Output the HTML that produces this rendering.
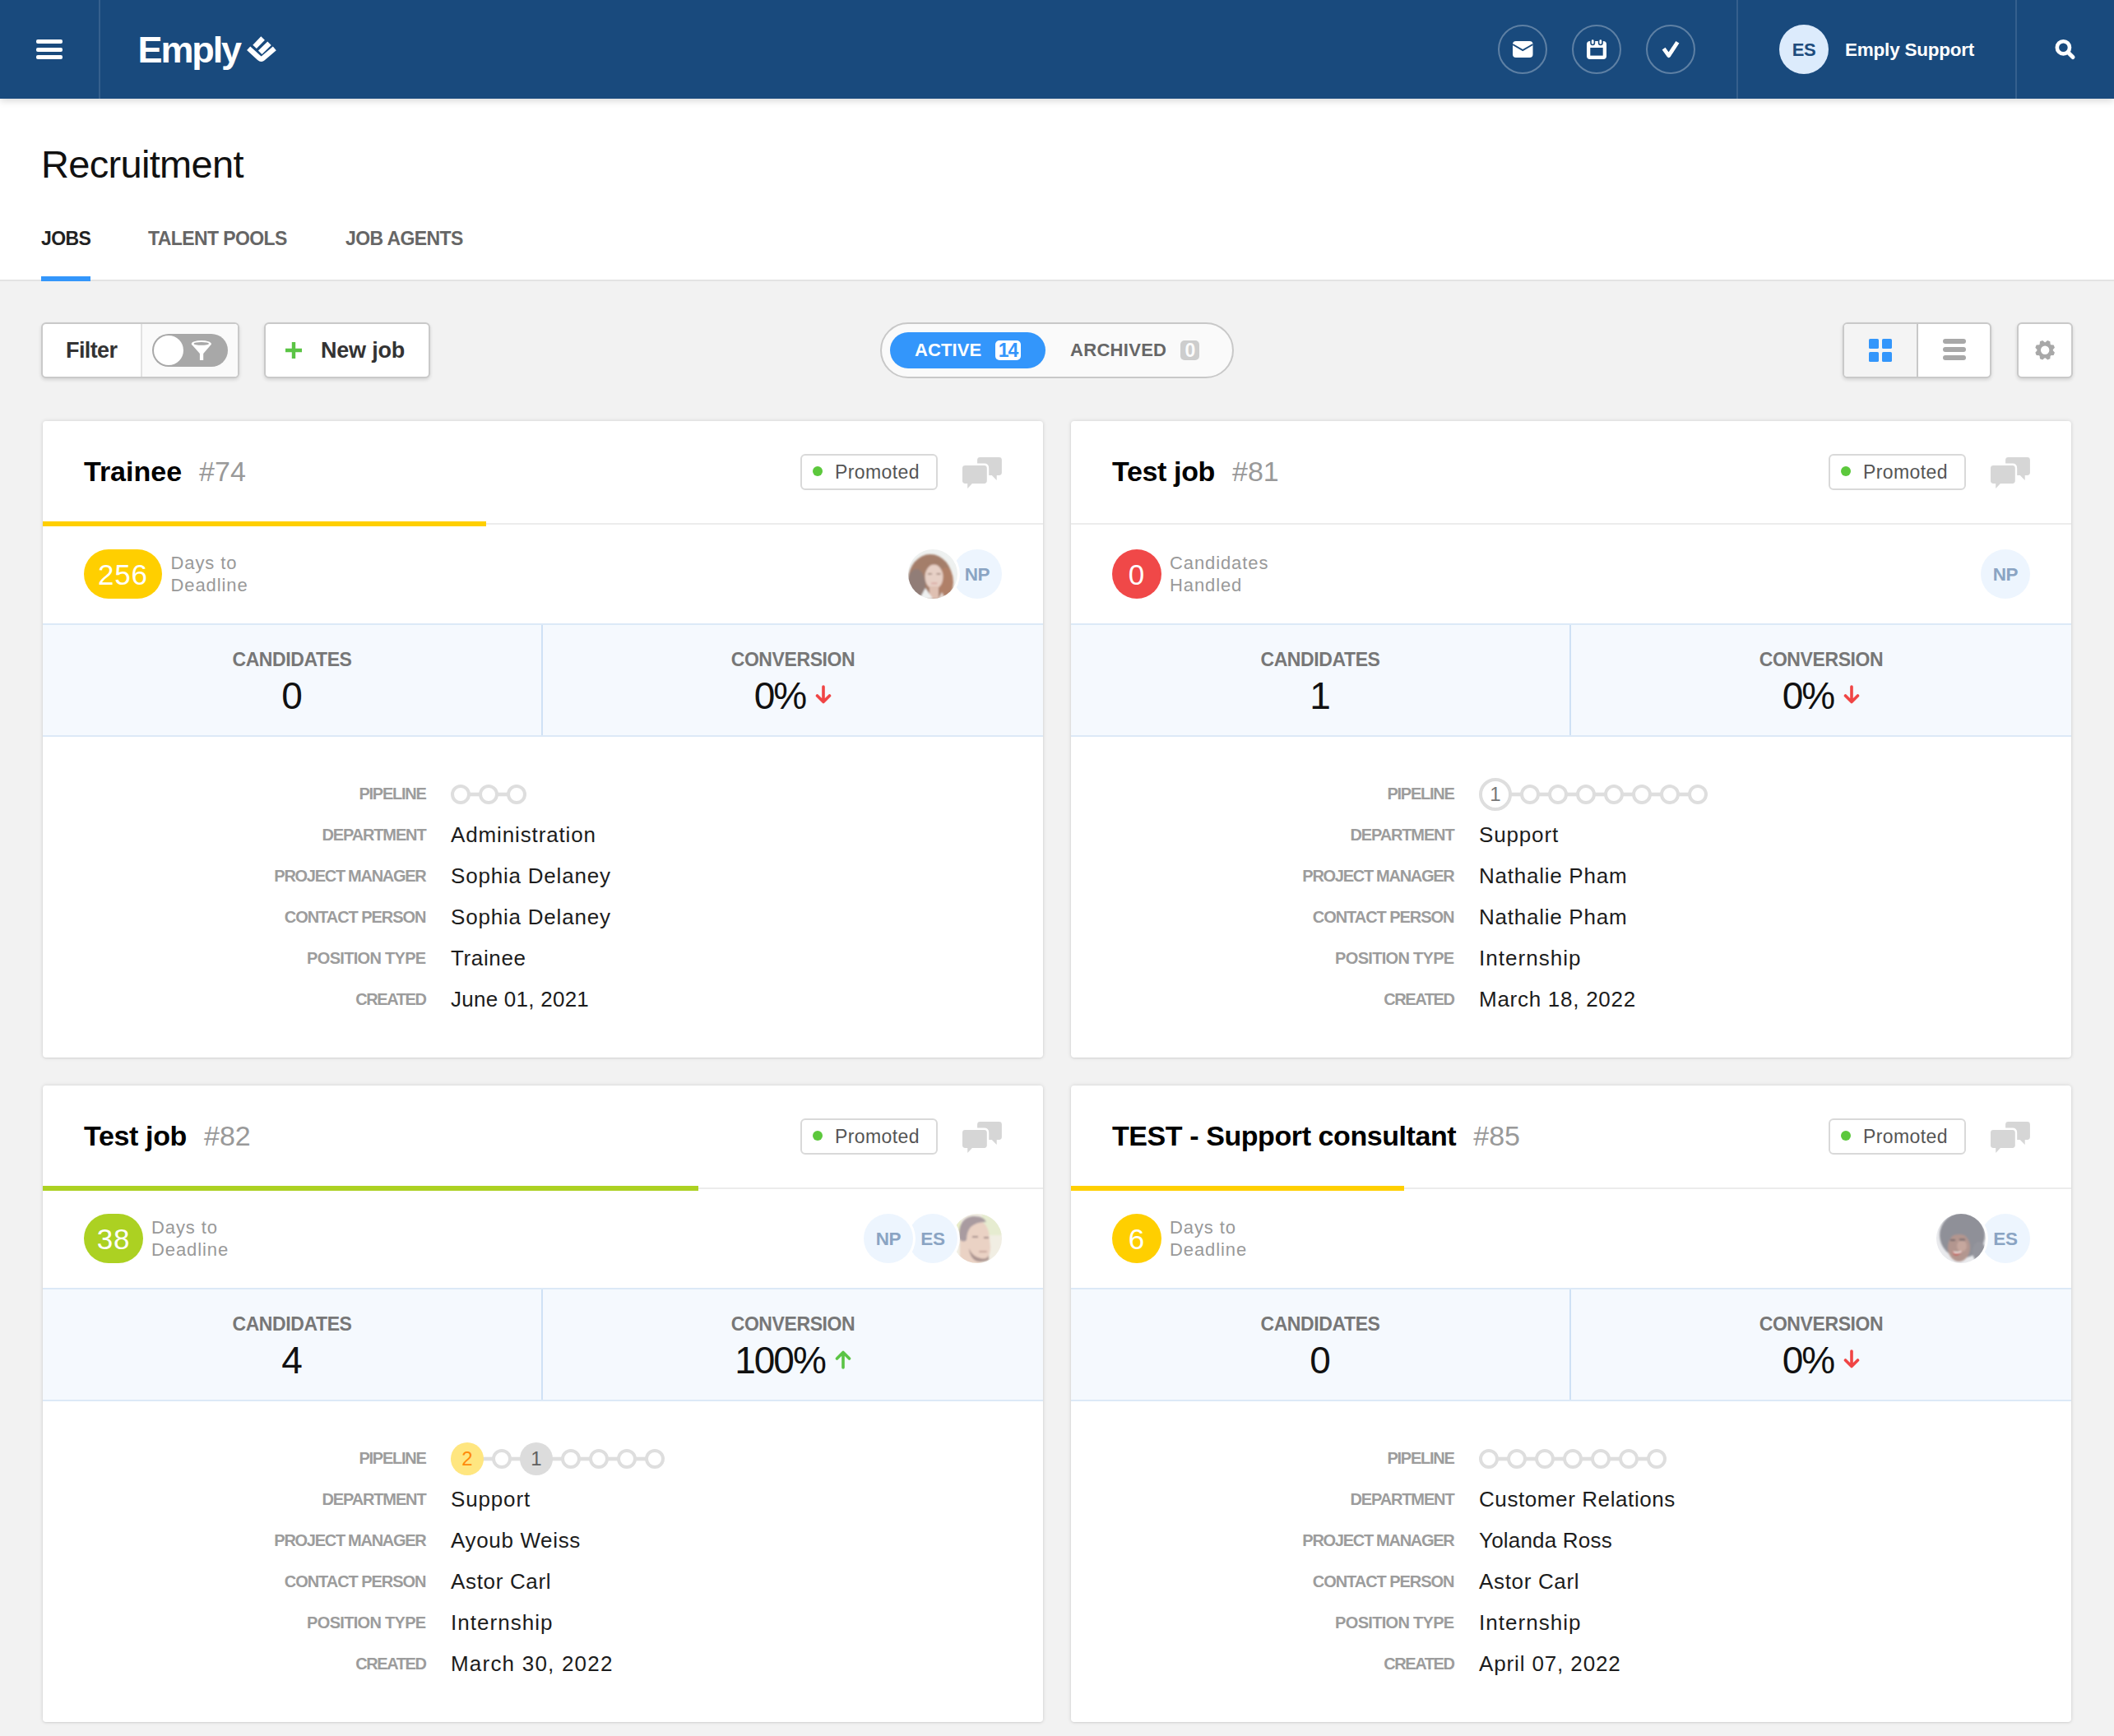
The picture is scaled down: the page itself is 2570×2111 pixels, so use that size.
<!DOCTYPE html>
<html>
<head>
<meta charset="utf-8">
<title>Recruitment</title>
<style>
*{box-sizing:border-box;margin:0;padding:0}
html,body{width:2570px;height:2111px;overflow:hidden}
body{font-family:"Liberation Sans",sans-serif;background:#f2f2f2;position:relative;color:#000}
.abs{position:absolute}
/* ---------- header ---------- */
#hdr{position:absolute;left:0;top:0;width:2570px;height:120px;background:#194a7d;box-shadow:0 2px 9px rgba(0,0,0,.18);z-index:5}
#hdr .sep{position:absolute;top:0;width:2px;height:120px;background:rgba(255,255,255,.125)}
#hdr .bar{position:absolute;left:44px;width:32px;height:5px;border-radius:2px;background:#fff}
#logo{position:absolute;left:167.5px;top:35px;font-size:45px;font-weight:bold;color:#fff;letter-spacing:-2.1px;line-height:52px;white-space:nowrap}
.hc{position:absolute;top:30px;width:60px;height:60px;border-radius:50%;border:2px solid rgba(255,255,255,.3)}
.hc svg{position:absolute;left:-2px;top:-2px}
#esav{position:absolute;left:2163px;top:30px;width:60px;height:60px;border-radius:50%;background:#dcebfc;color:#1e4b7c;font-weight:bold;font-size:22px;line-height:62.5px;text-align:center;letter-spacing:-.5px}
#uname{position:absolute;left:2243px;top:44.5px;font-size:22.5px;font-weight:bold;color:#fff;line-height:32px;letter-spacing:-.22px;white-space:nowrap}
/* ---------- subheader ---------- */
#sub{position:absolute;left:0;top:120px;width:2570px;height:222px;background:#fff;border-bottom:2px solid #e3e3e3}
#title{position:absolute;left:50px;top:170px;font-size:47px;line-height:60px;letter-spacing:-.68px;color:#111;white-space:nowrap}
.tab{position:absolute;top:275px;font-size:23px;font-weight:bold;line-height:30px;color:#666;white-space:nowrap;letter-spacing:-.6px}
#tabline{position:absolute;left:50px;top:336px;width:60px;height:6px;background:#3396fb}
/* ---------- toolbar ---------- */
.btn{position:absolute;top:392px;height:68px;background:#fff;border:2px solid #c9c9c9;border-radius:6px;box-shadow:0 2px 4px rgba(0,0,0,.13)}
.btxt{position:absolute;font-size:27px;font-weight:bold;color:#333;line-height:36px;white-space:nowrap;letter-spacing:-.6px}
#pill{position:absolute;left:1070px;top:392px;width:430px;height:68px;border-radius:34px;border:2px solid #c8c8c8;background:#fafafa}
#actv{position:absolute;left:10px;top:10px;width:189px;height:44px;border-radius:22px;background:#3396fb}
.ptxt{position:absolute;font-size:22px;font-weight:bold;line-height:30px;white-space:nowrap;letter-spacing:.1px}
.pbadge{position:absolute;top:20px;height:24px;border-radius:5px;font-size:23px;font-weight:bold;line-height:25.5px;text-align:center;letter-spacing:-1px;overflow:hidden}
/* ---------- cards ---------- */
.card{position:absolute;width:1218px;height:775px}
.card::before{content:"";position:absolute;left:2px;top:1px;right:0;bottom:0;background:#fff;border-radius:4px;box-shadow:0 0 5px rgba(0,0,0,.14),0 1px 2px rgba(0,0,0,.06)}
.card .ttl{position:absolute;left:52px;top:40px;font-size:34px;font-weight:bold;line-height:44px;color:#000;white-space:nowrap;letter-spacing:-.15px}
.card .ttl span{font-weight:normal;color:#999;margin-left:21px;letter-spacing:0}
.card .hline{position:absolute;left:2px;top:125px;width:1216px;height:2px;background:#ececec}
.card .prog{position:absolute;left:2px;top:123px;height:6px}
.promo{position:absolute;left:923px;top:41px;width:167px;height:44px;border:2px solid #d9d9d9;border-radius:6px;background:#fff}
.promo i{position:absolute;left:13px;top:13px;width:12px;height:12px;border-radius:50%;background:#5cc83c}
.promo b{position:absolute;left:40px;top:6px;font-weight:normal;font-size:23px;line-height:28px;color:#555;letter-spacing:.4px}
.chat{position:absolute;left:1119px;top:44px}
.badge{position:absolute;left:52px;top:157px;height:60px;border-radius:30px;color:#fff;font-size:35px;line-height:61px;text-align:center;letter-spacing:.8px}
.blab{position:absolute;top:160px;margin-left:-.5px;font-size:22px;line-height:27px;color:#999;letter-spacing:.9px;white-space:nowrap}
.av{position:absolute;top:157px;width:60px;height:60px;border-radius:50%;background:#edf5fe;color:#8aa4c3;font-size:22.5px;font-weight:bold;line-height:62.5px;text-align:center;letter-spacing:-.3px;box-shadow:0 0 0 3px #fff}
.av.ph{overflow:hidden;background:#fff}
.av.ph svg{display:block}
.stats{position:absolute;left:2px;top:247px;width:1216px;height:138px;background:#f5f9fe;border-top:2px solid #dce9f7;border-bottom:2px solid #dce9f7}
.stats .div{position:absolute;left:606px;top:0;width:2px;height:134px;background:#cfe1f5}
.stats .lab{position:absolute;top:27px;width:606px;text-align:center;font-size:23px;font-weight:bold;color:#777;line-height:30px;letter-spacing:-.4px}
.stats .num{position:absolute;top:58px;width:606px;text-align:center;font-size:46px;color:#111;line-height:56px;white-space:nowrap}
.stats .num.cv{letter-spacing:-2px}
.stats .num svg{margin-left:12px;vertical-align:5px}
.rows{position:absolute;left:0;top:429px;width:1218px}
.row{position:relative;height:50px}
.row .k{position:absolute;right:750.5px;top:12px;font-size:20px;font-weight:bold;color:#9c9c9c;line-height:26px;white-space:nowrap;letter-spacing:-1px}
.row .v{position:absolute;left:498px;top:7.5px;font-size:26px;color:#1c1c1c;line-height:34px;white-space:nowrap;letter-spacing:.72px}
.row .v.dt{letter-spacing:1.05px}
.pipe{position:absolute;left:497.7px;top:0}
</style>
</head>
<body>

<!-- ================= HEADER ================= -->
<div id="hdr">
  <div class="bar" style="top:48px"></div><div class="bar" style="top:58px"></div><div class="bar" style="top:67px"></div>
  <div class="sep" style="left:120px"></div>
  <div id="logo">Emply</div>
  <svg class="abs" style="left:296px;top:40px" width="44" height="40" viewBox="296 40 44 40">
    <path d="M302.2 58.8 L315.2 70.6 Q317.6 72.8 320 70.6 L333.8 58.8" fill="none" stroke="#fff" stroke-width="6.2" stroke-linejoin="round" stroke-linecap="butt"/>
    <path d="M309.6 56.9 L319.6 46.5" fill="none" stroke="#fff" stroke-width="6.4"/>
    <path d="M316.2 63.8 L327.5 52.8" fill="none" stroke="#fff" stroke-width="6.4"/>
  </svg>
  <div class="hc" style="left:1821px"><svg width="60" height="60" viewBox="0 0 60 60"><rect x="18" y="20" width="24.5" height="20" rx="4" fill="#fff"/><path d="M18 24 L30.2 31 L42.5 24" fill="none" stroke="#194a7d" stroke-width="2"/></svg></div>
  <div class="hc" style="left:1911px"><svg width="60" height="60" viewBox="0 0 60 60"><rect x="18" y="20" width="24" height="22" rx="4" fill="#fff"/><rect x="22.3" y="28" width="15.4" height="9.6" fill="#194a7d"/><rect x="23" y="17.5" width="4.4" height="7" rx="2.2" fill="#fff" stroke="#194a7d" stroke-width="1.6"/><rect x="32.6" y="17.5" width="4.4" height="7" rx="2.2" fill="#fff" stroke="#194a7d" stroke-width="1.6"/></svg></div>
  <div class="hc" style="left:2001px"><svg width="60" height="60" viewBox="0 0 60 60"><path d="M21.6 29.2 L27.7 37.6 L38.4 21.2" fill="none" stroke="#fff" stroke-width="4.8" stroke-linecap="butt" stroke-linejoin="round"/></svg></div>
  <div class="sep" style="left:2111px"></div>
  <div id="esav">ES</div>
  <div id="uname">Emply Support</div>
  <div class="sep" style="left:2450px"></div>
  <svg class="abs" style="left:2494px;top:44px" width="32" height="32" viewBox="0 0 32 32"><circle cx="14.4" cy="13.8" r="7.6" fill="none" stroke="#fff" stroke-width="4.6"/><path d="M20.2 19.8 L26 25.6" stroke="#fff" stroke-width="5" stroke-linecap="round"/></svg>
</div>

<!-- ================= SUBHEADER ================= -->
<div id="sub"></div>
<div id="title">Recruitment</div>
<div class="tab" style="left:50px;color:#222">JOBS</div>
<div class="tab" style="left:180px">TALENT POOLS</div>
<div class="tab" style="left:420px">JOB AGENTS</div>
<div id="tabline"></div>

<!-- ================= TOOLBAR ================= -->
<div class="btn" style="left:50px;width:241px">
  <div class="abs" style="left:119px;top:0;width:118px;height:64px;background:#fafafa;border-left:2px solid #e2e2e2;border-radius:0 4px 4px 0"></div>
  <div class="btxt" style="left:28px;top:14px">Filter</div>
  <div class="abs" style="left:133px;top:12px;width:92px;height:40px;border-radius:20px;background:#a8a8a8">
    <div class="abs" style="left:2px;top:2px;width:36px;height:36px;border-radius:50%;background:#fff"></div>
    <svg class="abs" style="left:46px;top:7px" width="28" height="28" viewBox="0 0 28 28"><ellipse cx="13.85" cy="5.1" rx="12.1" ry="4" fill="#fff"/><path d="M1.75 5.6 L11.9 17 V25 H16.2 V17 L25.95 5.6 Z" fill="#fff"/><ellipse cx="13.8" cy="4.9" rx="9.2" ry="1.85" fill="#a8a8a8"/></svg>
  </div>
</div>
<div class="btn" style="left:321px;width:202px">
  <svg class="abs" style="left:24px;top:22px" width="20" height="20" viewBox="0 0 20 20"><path d="M10 0.5 V19.5 M0.5 10 H19.5" stroke="#5bc445" stroke-width="4.4" stroke-linecap="round"/></svg>
  <div class="btxt" style="left:67px;top:14px;letter-spacing:-.2px">New job</div>
</div>

<div id="pill">
  <div id="actv"></div>
  <div class="ptxt" style="left:40px;top:17px;color:#fff">ACTIVE</div>
  <div class="pbadge" style="left:138px;width:31px;background:#fff;color:#3396fb">14</div>
  <div class="ptxt" style="left:229px;top:17px;color:#666;letter-spacing:.3px">ARCHIVED</div>
  <div class="pbadge" style="left:363px;width:23px;background:#cdcdcd;color:#fbfbfb">0</div>
</div>

<div class="btn" style="left:2240px;width:181px">
  <div class="abs" style="left:0;top:0;width:90px;height:64px;background:#f4f4f4;border-radius:4px 0 0 4px;border-right:2px solid #c8c8c8"></div>
  <svg class="abs" style="left:30px;top:18px" width="30" height="30" viewBox="0 0 30 30" fill="#3396fb"><rect x="0" y="0" width="12" height="12" rx="1.6"/><rect x="16" y="0" width="12" height="12" rx="1.6"/><rect x="0" y="16" width="12" height="12" rx="1.6"/><rect x="16" y="16" width="12" height="12" rx="1.6"/></svg>
  <svg class="abs" style="left:120px;top:18px" width="30" height="30" viewBox="0 0 30 30" fill="#a8a8a8"><rect x="0" y="0" width="28" height="6" rx="3"/><rect x="0" y="10" width="28" height="6" rx="3"/><rect x="0" y="20" width="28" height="6" rx="3"/></svg>
</div>
<div class="btn" style="left:2452px;width:68px">
  <svg class="abs" style="left:19px;top:19px" width="28" height="28" viewBox="-14 -14 28 28"><defs><path id="t" d="M-3.6 -8.4 L-1.7 -12.05 H1.7 L3.6 -8.4 Z"/></defs><g fill="#a8a8a8" transform="translate(-.85 -1.3)"><circle r="9.5"/><use href="#t" transform="rotate(22.5)"/><use href="#t" transform="rotate(67.5)"/><use href="#t" transform="rotate(112.5)"/><use href="#t" transform="rotate(157.5)"/><use href="#t" transform="rotate(202.5)"/><use href="#t" transform="rotate(247.5)"/><use href="#t" transform="rotate(292.5)"/><use href="#t" transform="rotate(337.5)"/></g><circle r="5.2" cx="-.85" cy="-1.3" fill="#fff"/></svg>
</div>

<!-- ================= CARDS ================= -->
<div class="card" style="left:50px;top:511px">
<div class="ttl" style="letter-spacing:0px">Trainee<span>#74</span></div>
<div class="promo"><i></i><b>Promoted</b></div>
<svg class="chat" width="50" height="40" viewBox="0 0 50 40" fill="#d6d6d6"><path d="M22.5 1 H45.5 Q48.9 1 48.9 4.4 V19.5 Q48.9 22.9 45.5 22.9 H42.7 V28.9 L36.8 22.9 H33.2 V14.5 Q33.2 8.6 27.4 8.6 H19.1 V4.4 Q19.1 1 22.5 1 Z"/><path d="M4.4 11 H27.4 Q30.8 11 30.8 14.4 V29.5 Q30.8 32.9 27.4 32.9 H12.9 L7.2 38.9 V32.9 H4.4 Q1 32.9 1 29.5 V14.4 Q1 11 4.4 11 Z"/></svg>
<div class="hline"></div>
<div class="prog" style="width:539px;background:#ffcf00"></div>
<div class="badge" style="width:95px;background:#ffcf00">256</div>
<div class="blab" style="left:158px">Days to<br>Deadline</div>
<div class="av ph" style="left:1054px;z-index:10"><svg width="60" height="60" viewBox="0 0 60 60"><defs><filter id="bl1" x="-10%" y="-10%" width="120%" height="120%"><feGaussianBlur stdDeviation="1.1"/></filter></defs><rect width="60" height="60" fill="#eef1f0"/><g filter="url(#bl1)"><ellipse cx="27" cy="38" rx="27" ry="32" fill="#a47e6a"/><ellipse cx="10" cy="44" rx="11" ry="20" fill="#917d77"/><ellipse cx="46" cy="40" rx="9" ry="18" fill="#b08068"/><ellipse cx="31.5" cy="33.5" rx="11" ry="15" fill="#e7d0c6"/><path d="M20 20 Q31 10 43 20 Q36 14 31 15 Q25 15 20 20 Z" fill="#a07560"/><rect x="26" y="45" width="11" height="15" fill="#dfc0b2"/><path d="M14 60 L21 47 L30 60 Z" fill="#eef0f0"/><path d="M37 60 L41 52 L45 60 Z" fill="#e4d6d0"/><rect x="24" y="29" width="5" height="1.6" fill="#9c8278"/><rect x="34.5" y="29" width="5" height="1.6" fill="#9c8278"/><rect x="28" y="40.5" width="7.5" height="1.8" rx=".9" fill="#d9a5a0"/></g></svg></div>
<div class="av" style="left:1108px;z-index:9">NP</div>
<div class="stats"><div class="div"></div><div class="lab" style="left:0">CANDIDATES</div><div class="num" style="left:0">0</div><div class="lab" style="left:608px;width:608px">CONVERSION</div><div class="num cv" style="left:608px;width:608px">0%<svg width="20" height="24" viewBox="0 0 20 24"><path d="M10 2 V20 M2.5 13 L10 20.5 L17.5 13" fill="none" stroke="#f04545" stroke-width="3.6" stroke-linecap="round" stroke-linejoin="round"/></svg></div></div>
<div class="rows">
<div class="row"><div class="k" style="letter-spacing:-1.26px">PIPELINE</div><svg class="pipe" width="94" height="52" viewBox="0 0 94 52"><rect x="22.00" y="23.7" width="14.00" height="4.6" fill="#dedede"/><rect x="56.00" y="23.7" width="14.00" height="4.6" fill="#dedede"/><circle cx="12.00" cy="26" r="10.00" fill="#fff" stroke="#dedede" stroke-width="4"/><circle cx="46.00" cy="26" r="10.00" fill="#fff" stroke="#dedede" stroke-width="4"/><circle cx="80.00" cy="26" r="10.00" fill="#fff" stroke="#dedede" stroke-width="4"/></svg></div>
<div class="row"><div class="k" style="letter-spacing:-1.13px">DEPARTMENT</div><div class="v" style="letter-spacing:0.87px">Administration</div></div>
<div class="row"><div class="k" style="letter-spacing:-1.28px">PROJECT MANAGER</div><div class="v" style="letter-spacing:0.8px">Sophia Delaney</div></div>
<div class="row"><div class="k" style="letter-spacing:-1.04px">CONTACT PERSON</div><div class="v" style="letter-spacing:0.8px">Sophia Delaney</div></div>
<div class="row"><div class="k" style="letter-spacing:-0.69px">POSITION TYPE</div><div class="v" style="letter-spacing:0.63px">Trainee</div></div>
<div class="row"><div class="k" style="letter-spacing:-1.41px">CREATED</div><div class="v" style="letter-spacing:0.25px">June 01, 2021</div></div>
</div></div>
<div class="card" style="left:1300px;top:511px">
<div class="ttl" style="letter-spacing:-0.35px">Test job<span>#81</span></div>
<div class="promo"><i></i><b>Promoted</b></div>
<svg class="chat" width="50" height="40" viewBox="0 0 50 40" fill="#d6d6d6"><path d="M22.5 1 H45.5 Q48.9 1 48.9 4.4 V19.5 Q48.9 22.9 45.5 22.9 H42.7 V28.9 L36.8 22.9 H33.2 V14.5 Q33.2 8.6 27.4 8.6 H19.1 V4.4 Q19.1 1 22.5 1 Z"/><path d="M4.4 11 H27.4 Q30.8 11 30.8 14.4 V29.5 Q30.8 32.9 27.4 32.9 H12.9 L7.2 38.9 V32.9 H4.4 Q1 32.9 1 29.5 V14.4 Q1 11 4.4 11 Z"/></svg>
<div class="hline"></div>
<div class="badge" style="width:60px;background:#f04848">0</div>
<div class="blab" style="left:122.5px">Candidates<br>Handled</div>
<div class="av" style="left:1108px;z-index:10">NP</div>
<div class="stats"><div class="div"></div><div class="lab" style="left:0">CANDIDATES</div><div class="num" style="left:0">1</div><div class="lab" style="left:608px;width:608px">CONVERSION</div><div class="num cv" style="left:608px;width:608px">0%<svg width="20" height="24" viewBox="0 0 20 24"><path d="M10 2 V20 M2.5 13 L10 20.5 L17.5 13" fill="none" stroke="#f04545" stroke-width="3.6" stroke-linecap="round" stroke-linejoin="round"/></svg></div></div>
<div class="rows">
<div class="row"><div class="k" style="letter-spacing:-1.26px">PIPELINE</div><svg class="pipe" width="280" height="52" viewBox="0 0 280 52"><rect x="38.00" y="23.7" width="14.00" height="4.6" fill="#dedede"/><rect x="72.00" y="23.7" width="14.00" height="4.6" fill="#dedede"/><rect x="106.00" y="23.7" width="14.00" height="4.6" fill="#dedede"/><rect x="140.00" y="23.7" width="14.00" height="4.6" fill="#dedede"/><rect x="174.00" y="23.7" width="14.00" height="4.6" fill="#dedede"/><rect x="208.00" y="23.7" width="14.00" height="4.6" fill="#dedede"/><rect x="242.00" y="23.7" width="14.00" height="4.6" fill="#dedede"/><circle cx="20.00" cy="26" r="18.00" fill="#fff" stroke="#dedede" stroke-width="4"/><text x="20.00" y="33.6" text-anchor="middle" font-family="Liberation Sans" font-size="24" fill="#777">1</text><circle cx="62.00" cy="26" r="10.00" fill="#fff" stroke="#dedede" stroke-width="4"/><circle cx="96.00" cy="26" r="10.00" fill="#fff" stroke="#dedede" stroke-width="4"/><circle cx="130.00" cy="26" r="10.00" fill="#fff" stroke="#dedede" stroke-width="4"/><circle cx="164.00" cy="26" r="10.00" fill="#fff" stroke="#dedede" stroke-width="4"/><circle cx="198.00" cy="26" r="10.00" fill="#fff" stroke="#dedede" stroke-width="4"/><circle cx="232.00" cy="26" r="10.00" fill="#fff" stroke="#dedede" stroke-width="4"/><circle cx="266.00" cy="26" r="10.00" fill="#fff" stroke="#dedede" stroke-width="4"/></svg></div>
<div class="row"><div class="k" style="letter-spacing:-1.13px">DEPARTMENT</div><div class="v" style="letter-spacing:0.84px">Support</div></div>
<div class="row"><div class="k" style="letter-spacing:-1.28px">PROJECT MANAGER</div><div class="v" style="letter-spacing:0.75px">Nathalie Pham</div></div>
<div class="row"><div class="k" style="letter-spacing:-1.04px">CONTACT PERSON</div><div class="v" style="letter-spacing:0.75px">Nathalie Pham</div></div>
<div class="row"><div class="k" style="letter-spacing:-0.69px">POSITION TYPE</div><div class="v" style="letter-spacing:1.04px">Internship</div></div>
<div class="row"><div class="k" style="letter-spacing:-1.41px">CREATED</div><div class="v" style="letter-spacing:0.73px">March 18, 2022</div></div>
</div></div>
<div class="card" style="left:50px;top:1319px">
<div class="ttl" style="letter-spacing:-0.35px">Test job<span>#82</span></div>
<div class="promo"><i></i><b>Promoted</b></div>
<svg class="chat" width="50" height="40" viewBox="0 0 50 40" fill="#d6d6d6"><path d="M22.5 1 H45.5 Q48.9 1 48.9 4.4 V19.5 Q48.9 22.9 45.5 22.9 H42.7 V28.9 L36.8 22.9 H33.2 V14.5 Q33.2 8.6 27.4 8.6 H19.1 V4.4 Q19.1 1 22.5 1 Z"/><path d="M4.4 11 H27.4 Q30.8 11 30.8 14.4 V29.5 Q30.8 32.9 27.4 32.9 H12.9 L7.2 38.9 V32.9 H4.4 Q1 32.9 1 29.5 V14.4 Q1 11 4.4 11 Z"/></svg>
<div class="hline"></div>
<div class="prog" style="width:797px;background:#acd122"></div>
<div class="badge" style="width:72px;background:#acd122">38</div>
<div class="blab" style="left:134.5px">Days to<br>Deadline</div>
<div class="av" style="left:1000px;z-index:10">NP</div>
<div class="av" style="left:1054px;z-index:9">ES</div>
<div class="av ph" style="left:1108px;z-index:8"><svg width="60" height="60" viewBox="0 0 60 60"><defs><filter id="bl2" x="-10%" y="-10%" width="120%" height="120%"><feGaussianBlur stdDeviation="1.1"/></filter></defs><rect width="60" height="60" fill="#f1eee3"/><g filter="url(#bl2)"><rect x="36" y="0" width="24" height="26" fill="#e6ecd0"/><rect x="0" y="6" width="10" height="20" fill="#e9edc9"/><path d="M9 60 L9 24 Q10 8 26 7 Q40 7 44 22 L46 40 Q46 52 40 56 L33 60 Z" fill="#ead2c4"/><path d="M8 30 Q6 6 24 3 Q38 2 41 10 Q30 9 22 16 Q17 22 17 32 Q12 36 8 30 Z" fill="#a99ba0"/><path d="M20 42 Q24 52 34 54 Q42 56 44 50 L44 56 Q36 60 28 57 Q21 53 20 42 Z" fill="#ab9490"/><rect x="24" y="27" width="7" height="2" fill="#a58f8a"/><rect x="38" y="28" width="6" height="2" fill="#a58f8a"/><rect x="32" y="45" width="10" height="2" rx="1" fill="#c9a79d"/></g></svg></div>
<div class="stats"><div class="div"></div><div class="lab" style="left:0">CANDIDATES</div><div class="num" style="left:0">4</div><div class="lab" style="left:608px;width:608px">CONVERSION</div><div class="num cv" style="left:608px;width:608px">100%<svg width="20" height="24" viewBox="0 0 20 24"><path d="M10 22 V4 M2.5 11 L10 3.5 L17.5 11" fill="none" stroke="#5bc445" stroke-width="3.6" stroke-linecap="round" stroke-linejoin="round"/></svg></div></div>
<div class="rows">
<div class="row"><div class="k" style="letter-spacing:-1.26px">PIPELINE</div><svg class="pipe" width="262" height="52" viewBox="0 0 262 52"><rect x="38.00" y="23.7" width="14.00" height="4.6" fill="#dedede"/><rect x="72.00" y="23.7" width="14.00" height="4.6" fill="#dedede"/><rect x="122.00" y="23.7" width="14.00" height="4.6" fill="#dedede"/><rect x="156.00" y="23.7" width="14.00" height="4.6" fill="#dedede"/><rect x="190.00" y="23.7" width="14.00" height="4.6" fill="#dedede"/><rect x="224.00" y="23.7" width="14.00" height="4.6" fill="#dedede"/><circle cx="20.00" cy="26" r="20.00" fill="#ffe680"/><text x="20.00" y="33.6" text-anchor="middle" font-family="Liberation Sans" font-size="24" fill="#ff8a0a">2</text><circle cx="62.00" cy="26" r="10.00" fill="#fff" stroke="#dedede" stroke-width="4"/><circle cx="104.00" cy="26" r="20.00" fill="#dcdcdc"/><text x="104.00" y="33.6" text-anchor="middle" font-family="Liberation Sans" font-size="24" fill="#606060">1</text><circle cx="146.00" cy="26" r="10.00" fill="#fff" stroke="#dedede" stroke-width="4"/><circle cx="180.00" cy="26" r="10.00" fill="#fff" stroke="#dedede" stroke-width="4"/><circle cx="214.00" cy="26" r="10.00" fill="#fff" stroke="#dedede" stroke-width="4"/><circle cx="248.00" cy="26" r="10.00" fill="#fff" stroke="#dedede" stroke-width="4"/></svg></div>
<div class="row"><div class="k" style="letter-spacing:-1.13px">DEPARTMENT</div><div class="v" style="letter-spacing:0.84px">Support</div></div>
<div class="row"><div class="k" style="letter-spacing:-1.28px">PROJECT MANAGER</div><div class="v" style="letter-spacing:0.65px">Ayoub Weiss</div></div>
<div class="row"><div class="k" style="letter-spacing:-1.04px">CONTACT PERSON</div><div class="v" style="letter-spacing:0.67px">Astor Carl</div></div>
<div class="row"><div class="k" style="letter-spacing:-0.69px">POSITION TYPE</div><div class="v" style="letter-spacing:1.04px">Internship</div></div>
<div class="row"><div class="k" style="letter-spacing:-1.41px">CREATED</div><div class="v" style="letter-spacing:1.21px">March 30, 2022</div></div>
</div></div>
<div class="card" style="left:1300px;top:1319px">
<div class="ttl" style="letter-spacing:-0.42px">TEST - Support consultant<span>#85</span></div>
<div class="promo"><i></i><b>Promoted</b></div>
<svg class="chat" width="50" height="40" viewBox="0 0 50 40" fill="#d6d6d6"><path d="M22.5 1 H45.5 Q48.9 1 48.9 4.4 V19.5 Q48.9 22.9 45.5 22.9 H42.7 V28.9 L36.8 22.9 H33.2 V14.5 Q33.2 8.6 27.4 8.6 H19.1 V4.4 Q19.1 1 22.5 1 Z"/><path d="M4.4 11 H27.4 Q30.8 11 30.8 14.4 V29.5 Q30.8 32.9 27.4 32.9 H12.9 L7.2 38.9 V32.9 H4.4 Q1 32.9 1 29.5 V14.4 Q1 11 4.4 11 Z"/></svg>
<div class="hline"></div>
<div class="prog" style="width:405px;background:#ffcf00"></div>
<div class="badge" style="width:60px;background:#ffcf00">6</div>
<div class="blab" style="left:122.5px">Days to<br>Deadline</div>
<div class="av ph" style="left:1054px;z-index:10"><svg width="60" height="60" viewBox="0 0 60 60"><defs><filter id="bl3" x="-10%" y="-10%" width="120%" height="120%"><feGaussianBlur stdDeviation="1.1"/></filter></defs><rect width="60" height="60" fill="#e9eaed"/><g filter="url(#bl3)"><circle cx="31.5" cy="26" r="27.5" fill="#8f9098"/><ellipse cx="52" cy="46" rx="8" ry="12" fill="#94959d"/><ellipse cx="27.5" cy="41" rx="13.5" ry="17" fill="#b3968f"/><ellipse cx="31" cy="39" rx="6" ry="7" fill="#c6a79e"/><path d="M14 28 Q28 16 42 28 Q28 22 14 28 Z" fill="#8f9098"/><rect x="17" y="31" width="6" height="2" fill="#6f6468"/><rect x="28" y="30.5" width="7" height="2" fill="#6f6468"/><path d="M19 45 Q27 50 32 44 Q28 53 21 50 Z" fill="#c4655f"/><path d="M20 45.5 Q26 48 31 44.8 L30 47 Q25 49 21 47.2 Z" fill="#f6f2f0"/></g></svg></div>
<div class="av" style="left:1108px;z-index:9">ES</div>
<div class="stats"><div class="div"></div><div class="lab" style="left:0">CANDIDATES</div><div class="num" style="left:0">0</div><div class="lab" style="left:608px;width:608px">CONVERSION</div><div class="num cv" style="left:608px;width:608px">0%<svg width="20" height="24" viewBox="0 0 20 24"><path d="M10 2 V20 M2.5 13 L10 20.5 L17.5 13" fill="none" stroke="#f04545" stroke-width="3.6" stroke-linecap="round" stroke-linejoin="round"/></svg></div></div>
<div class="rows">
<div class="row"><div class="k" style="letter-spacing:-1.26px">PIPELINE</div><svg class="pipe" width="230" height="52" viewBox="0 0 230 52"><rect x="22.00" y="23.7" width="14.00" height="4.6" fill="#dedede"/><rect x="56.00" y="23.7" width="14.00" height="4.6" fill="#dedede"/><rect x="90.00" y="23.7" width="14.00" height="4.6" fill="#dedede"/><rect x="124.00" y="23.7" width="14.00" height="4.6" fill="#dedede"/><rect x="158.00" y="23.7" width="14.00" height="4.6" fill="#dedede"/><rect x="192.00" y="23.7" width="14.00" height="4.6" fill="#dedede"/><circle cx="12.00" cy="26" r="10.00" fill="#fff" stroke="#dedede" stroke-width="4"/><circle cx="46.00" cy="26" r="10.00" fill="#fff" stroke="#dedede" stroke-width="4"/><circle cx="80.00" cy="26" r="10.00" fill="#fff" stroke="#dedede" stroke-width="4"/><circle cx="114.00" cy="26" r="10.00" fill="#fff" stroke="#dedede" stroke-width="4"/><circle cx="148.00" cy="26" r="10.00" fill="#fff" stroke="#dedede" stroke-width="4"/><circle cx="182.00" cy="26" r="10.00" fill="#fff" stroke="#dedede" stroke-width="4"/><circle cx="216.00" cy="26" r="10.00" fill="#fff" stroke="#dedede" stroke-width="4"/></svg></div>
<div class="row"><div class="k" style="letter-spacing:-1.13px">DEPARTMENT</div><div class="v" style="letter-spacing:0.59px">Customer Relations</div></div>
<div class="row"><div class="k" style="letter-spacing:-1.28px">PROJECT MANAGER</div><div class="v" style="letter-spacing:0.2px">Yolanda Ross</div></div>
<div class="row"><div class="k" style="letter-spacing:-1.04px">CONTACT PERSON</div><div class="v" style="letter-spacing:0.67px">Astor Carl</div></div>
<div class="row"><div class="k" style="letter-spacing:-0.69px">POSITION TYPE</div><div class="v" style="letter-spacing:1.04px">Internship</div></div>
<div class="row"><div class="k" style="letter-spacing:-1.41px">CREATED</div><div class="v" style="letter-spacing:0.87px">April 07, 2022</div></div>
</div></div>

</body>
</html>
